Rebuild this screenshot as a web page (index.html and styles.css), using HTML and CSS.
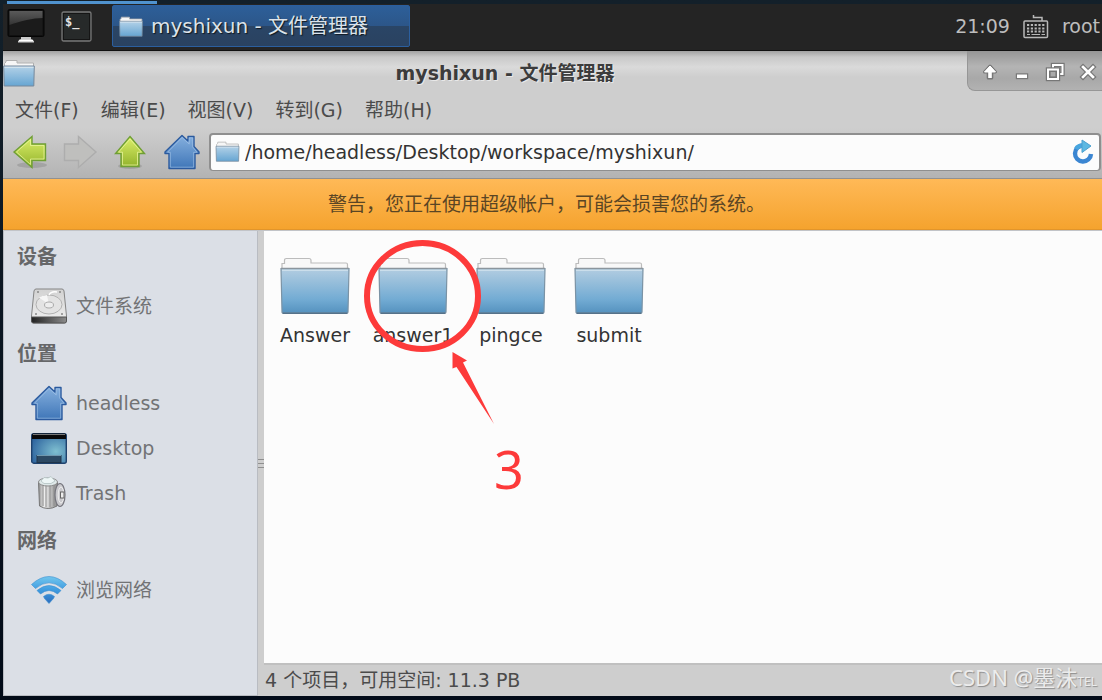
FILE: index.html
```html
<!DOCTYPE html>
<html lang="zh-CN">
<head>
<meta charset="utf-8">
<title>myshixun - 文件管理器</title>
<link rel="stylesheet" href="styles.css">
</head>
<body>
<svg class="defs" width="0" height="0" aria-hidden="true">
  <defs>
    <linearGradient id="gFolder" x1="0" y1="0" x2="0" y2="1"><stop offset="0" stop-color="#b3cde1"/><stop offset=".7" stop-color="#72abd3"/><stop offset="1" stop-color="#5592bf"/></linearGradient>
    <linearGradient id="gFolderS" x1="0" y1="0" x2="0" y2="1"><stop offset="0" stop-color="#b4d2e8"/><stop offset="1" stop-color="#66a5d2"/></linearGradient>
    <linearGradient id="gGreen" x1="0" y1="0" x2="0" y2="1"><stop offset="0" stop-color="#dcf06a"/><stop offset="1" stop-color="#93b32c"/></linearGradient>
    <linearGradient id="gHome" x1="0" y1="0" x2="0" y2="1"><stop offset="0" stop-color="#86b0de"/><stop offset="1" stop-color="#3f76b8"/></linearGradient>
    <linearGradient id="gWifi" gradientUnits="userSpaceOnUse" x1="0" y1="0" x2="0" y2="28"><stop offset="0" stop-color="#74c8ee"/><stop offset=".5" stop-color="#3e9be0"/><stop offset="1" stop-color="#2c6cbc"/></linearGradient>
    <linearGradient id="gDisk" x1="0" y1="0" x2="0" y2="1"><stop offset="0" stop-color="#d2d2d2"/><stop offset="1" stop-color="#f0f0f0"/></linearGradient>
    <linearGradient id="gDark" x1="0" y1="0" x2="1" y2="0"><stop offset="0" stop-color="#222"/><stop offset="1" stop-color="#8c8c8c"/></linearGradient>
    <radialGradient id="gDesk" cx=".7" cy=".6" r=".75"><stop offset="0" stop-color="#7fbfd0"/><stop offset="1" stop-color="#2f66a0"/></radialGradient>
    <linearGradient id="gCan" x1="0" y1="0" x2="1" y2="0"><stop offset="0" stop-color="#8c8c8c"/><stop offset=".3" stop-color="#f0f0f0"/><stop offset=".6" stop-color="#c4c4c4"/><stop offset="1" stop-color="#8a8a8a"/></linearGradient>
    <linearGradient id="gScreen" x1="0" y1="0" x2="0" y2="1"><stop offset="0" stop-color="#5a5a5a"/><stop offset="1" stop-color="#343434"/></linearGradient>
    <symbol id="folder" viewBox="0 0 70 58">
      <path d="M2 14V6.500H4.500V3.500Q4.500 1.500 6.500 1.500H29Q31 1.500 31 3.500V6H66Q67.500 6 67.500 7.500V14Z" fill="#f8f8f8" stroke="#bcbcbc" stroke-width="1.200"/>
      <path d="M1 11.500H69L68 55Q68 56 67 56H3Q2 56 2 55Z" fill="url(#gFolder)" stroke="#7b93a5" stroke-width="1.200"/>
      <path d="M1 11.500H69" stroke="#8b959d" stroke-width="1.500"/>
      <path d="M2 13.300H68" stroke="#d3e3ee"/>
      <path d="M2.500 56.300H67.500" stroke="#55728a" stroke-width="1.500"/>
    </symbol>
    <symbol id="folder-s" viewBox="0 0 32 28">
      <path d="M1.500 8V4.500L3 3V1.500H14V4H30.500V8Z" fill="#f6f6f6" stroke="#b0b0b0"/>
      <path d="M.7 7H31.300L30.800 27H1.200Z" fill="url(#gFolderS)" stroke="#76889a"/>
      <path d="M1.500 8.300H30.500" stroke="#d9e6ef"/>
    </symbol>
    <symbol id="home" viewBox="0 0 36 36">
      <path d="M18 1.500L24 7V2.500H30V12.500L35 18V19.500H31V34.500H5V19.500H1V18Z" fill="url(#gHome)" stroke="#2b5a9e" stroke-width="1.400" stroke-linejoin="round"/>
      <path d="M6.300 33.200V18.300H3.500L18 3.500L25.200 10V3.800H28.700V13L33 18.300H29.700V33.200Z" fill="none" stroke="#a5c6e8" stroke-width=".9" opacity=".7"/>
    </symbol>
  </defs>
</svg>

<div class="tabstrip"><span class="tabline"></span></div>

<header class="panel">
  <button class="launch" aria-label="显示桌面">
    <svg width="38" height="34" viewBox="0 0 38 34"><rect x="1" y=".5" width="36" height="27" rx="1.500" fill="#101010" stroke="#050505"/><rect x="2.500" y="2" width="33" height="24" fill="#1b1b1b"/><path d="M2.500 2H35.500V9C26 9 14 12 2.500 16Z" fill="url(#gScreen)"/><path d="M14 28H24V30L27 32V33.500H11V32L14 30Z" fill="#c9c9c9"/><path d="M12 31.500H26" stroke="#fff" stroke-width="1.500"/></svg>
  </button>
  <button class="launch" aria-label="终端">
    <svg width="31" height="31" viewBox="0 0 31 31"><rect x="1" y="1" width="29" height="29" rx="1.500" fill="#272a2a" stroke="#777" stroke-width="1.300"/><rect x="2.500" y="2.500" width="26" height="26" fill="none" stroke="#151515"/><text class="prompt" x="4" y="15">$_</text></svg>
  </button>
  <button class="task"><svg width="24" height="21"><use href="#folder-s"/></svg>myshixun - 文件管理器</button>
  <div class="tray">
    <time>21:09</time>
    <svg width="26" height="26" viewBox="0 0 26 26" fill="none" stroke="#b8b8b8"><rect x="1" y="8" width="23.500" height="16.500" rx="1" stroke-width="1.500"/><path d="M10.500 2V4.500H19V8" stroke-width="1.500"/><path d="M4 12H22M4 15.500H22M4 18.500H22" stroke-width="2" stroke-dasharray="2.200 1.600"/><path d="M4 21.500H7M8.500 21.500H17M18.500 21.500H22" stroke-width="1.200"/></svg>
    <span>root</span>
  </div>
</header>

<div class="window">
  <div class="titlebar">
    <svg class="title-icon" width="32" height="28"><use href="#folder-s"/></svg>
    <h1>myshixun - 文件管理器</h1>
    <div class="controls">
      <button aria-label="卷起"><svg width="18" height="18" viewBox="0 0 18 18"><path d="M9 3L14.500 9H10.800V15H7.200V9H3.500Z" fill="#fff" stroke="#777" stroke-width="3" stroke-linejoin="round" paint-order="stroke"/><path d="M9 3L14.500 9H3.500Z" fill="#fff" stroke="#fff" stroke-linejoin="round"/></svg></button>
      <button aria-label="最小化"><svg width="18" height="18" viewBox="0 0 18 18"><rect x="4" y="11.500" width="10" height="3.500" fill="#fff" stroke="#777" stroke-width="2.400" paint-order="stroke"/></svg></button>
      <button aria-label="还原"><svg width="20" height="20" viewBox="0 0 20 20" fill="none"><rect x="8" y="3" width="9.500" height="9" stroke="#777" stroke-width="4.400"/><rect x="8" y="3" width="9.500" height="9" stroke="#fff" stroke-width="2"/><rect x="3" y="7.500" width="10" height="9.500" fill="#aaa" stroke="#777" stroke-width="4.400"/><rect x="3" y="7.500" width="10" height="9.500" stroke="#fff" stroke-width="2"/><rect x="5" y="9.500" width="6" height="5.500" stroke="#777"/></svg></button>
      <button aria-label="关闭"><svg width="18" height="18" viewBox="0 0 18 18" stroke-linecap="square"><path d="M4 4L14 14M14 4L4 14" stroke="#777" stroke-width="5"/><path d="M4 4L14 14M14 4L4 14" stroke="#fff" stroke-width="2.600"/></svg></button>
    </div>
  </div>

  <nav class="menu">
    <button>文件(F)</button><button>编辑(E)</button><button>视图(V)</button><button>转到(G)</button><button>帮助(H)</button>
  </nav>

  <div class="toolbar">
    <button aria-label="后退"><svg width="36" height="36" viewBox="0 0 36 36"><ellipse cx="20" cy="31" rx="15" ry="3" fill="#000" opacity=".12"/><path d="M2 18L20 2.500V10H33.500V26.500H20V33.500Z" fill="url(#gGreen)" stroke="#6f9f35" stroke-width="1.400"/><path d="M4.500 18L18.500 5.500V11.500H32V25H18.500V30.500Z" fill="none" stroke="#eef9a5" opacity=".7"/></svg></button>
    <button aria-label="前进" disabled><svg width="36" height="36" viewBox="0 0 36 36"><path d="M34 18L16.500 2.500V10H2.500V26.500H16.500V33.500Z" fill="#bfbfbd" stroke="#adadad" stroke-width="1.400"/></svg></button>
    <button aria-label="向上"><svg width="32" height="36" viewBox="0 0 32 36"><ellipse cx="16" cy="32" rx="12" ry="3" fill="#000" opacity=".12"/><path d="M16 2.500L30.500 19.500H25V32.500H7V19.500H1.500Z" fill="url(#gGreen)" stroke="#6f9f35" stroke-width="1.400"/><path d="M16 5L27.500 18.200H23.500V31H8.500V18.200H4.500Z" fill="none" stroke="#eef9a5" opacity=".7"/></svg></button>
    <button aria-label="主目录"><svg width="36" height="36"><use href="#home"/></svg></button>
    <div class="address">
      <svg width="25" height="21"><use href="#folder-s"/></svg>
      <input type="text" aria-label="路径" value="/home/headless/Desktop/workspace/myshixun/">
      <button aria-label="重新载入"><svg width="24" height="26" viewBox="0 0 24 26"><path d="M12 6.500A8 8 0 1 0 20 15" fill="none" stroke="#3b86d2" stroke-width="4.400"/><path d="M5 10Q7 6.500 12 6.500" fill="none" stroke="#48a6df" stroke-width="4.400"/><path d="M11 1L20 7L11 13.500Z" fill="#5cb8e2" stroke="#4a9fce"/></svg></button>
    </div>
  </div>

  <p class="warning">警告，您正在使用超级帐户，可能会损害您的系统。</p>

  <div class="content">
    <aside class="sidebar">
      <h2>设备</h2>
      <a href="#fs"><svg width="36" height="36" viewBox="0 0 36 36"><path d="M5 1H31Q32.500 1 33 3L35.500 28V33Q35.500 35 33.500 35H2.500Q.5 35 .5 33V28L3 3Q3.500 1 5 1Z" fill="url(#gDisk)" stroke="#858585"/><path d="M.5 29H35.500V33Q35.500 35 33.500 35H2.500Q.5 35 .5 33Z" fill="url(#gDark)" stroke="#555"/><ellipse cx="18" cy="16.500" rx="13" ry="9.500" fill="#e3e3e3" stroke="#b2b2b2"/><path d="M18 16.500L8 9.500A13 9.500 0 0 1 16 7Z" fill="#f6f6f6"/><ellipse cx="18" cy="17" rx="4.500" ry="3" fill="#ededed" stroke="#aaa"/><path d="M6 4H8M28 4H30M4 26H6M30 26H32" stroke="#888" stroke-width="1.500"/><path d="M18 7Q20 3 26 4" fill="none" stroke="#fff" stroke-width="1.500"/></svg>文件系统</a>
      <h2>位置</h2>
      <a href="#headless"><svg width="36" height="36"><use href="#home"/></svg>headless</a>
      <a href="#desktop"><svg width="36" height="36" viewBox="0 0 36 36"><rect x=".7" y="3.700" width="34.600" height="29.500" rx="2" fill="url(#gDesk)" stroke="#1f426d" stroke-width="1.400"/><path d="M1 9V5Q1 3.500 2.500 3.500H33.500Q35 3.500 35 5V9Z" fill="#090909"/><path d="M2 4.500H34" stroke="#777"/><rect x="6" y="25.500" width="24" height="7" fill="#2c4963" stroke="#20354a"/><path d="M6 25.500H30" stroke="#7097ad"/></svg>Desktop</a>
      <a href="#trash"><svg width="36" height="36" viewBox="0 0 36 36"><path d="M7.500 7L8.500 31Q17 36 26 31L26.500 7Z" fill="url(#gCan)" stroke="#777"/><path d="M12 10V31M15 11V32M19 11V32M23 10V31" stroke="#8c8c8c"/><ellipse cx="17" cy="7" rx="9.500" ry="4" fill="#dfe9e9" stroke="#8b8b8b"/><path d="M10 6L13 2.500L17 3L20 1.500L24 6L20 8.500H13Z" fill="#edf6f6" stroke="#b3c2c2" stroke-width=".8"/><ellipse cx="29" cy="20" rx="5" ry="11.500" fill="#c9c9cd" stroke="#74747c" stroke-width="1.200"/><ellipse cx="30" cy="20" rx="2.800" ry="8" fill="none" stroke="#eee"/><rect x="29.500" y="17" width="3.500" height="6" fill="#eee" stroke="#666"/></svg>Trash</a>
      <h2>网络</h2>
      <a href="#network"><svg width="36" height="28" viewBox="0 0 36 28" fill="url(#gWifi)" stroke="#3a8fd0" stroke-width=".6"><path d="M.5 8.500Q18-7.500 35.500 8.500L31.500 12.500Q18 1 4.500 12.500Z"/><path d="M6 14.500Q18 4.500 30 14.500L26.500 18Q18 11 9.500 18Z"/><path d="M12.500 20.500Q18 16 23.500 20.500L22.500 22.500L18 27.500L13.500 22.500Z"/></svg>浏览网络</a>
    </aside>
    <div class="splitter"><span></span><span></span><span></span></div>
    <div class="pane">
      <main class="files">
        <a href="#Answer"><svg width="70" height="58"><use href="#folder"/></svg>Answer</a>
        <a href="#answer1"><svg width="70" height="58"><use href="#folder"/></svg>answer1</a>
        <a href="#pingce"><svg width="70" height="58"><use href="#folder"/></svg>pingce</a>
        <a href="#submit"><svg width="70" height="58"><use href="#folder"/></svg>submit</a>
        <svg class="callout" width="300" height="320" viewBox="0 0 300 320"><ellipse cx="158.500" cy="65" rx="55.500" ry="53" fill="none" stroke="#fd3a3a" stroke-width="6"/><path d="M188.500 121L203 129.500L199 131.500L230 193L192.500 136L188.500 137.500Z" fill="#fd3a3a"/><text class="step" x="230" y="258">3</text></svg>
      </main>
      <footer class="status"><span>4 个项目，可用空间: 11.3 PB</span><span class="mark">CSDN @墨沫<small>TEL</small></span></footer>
    </div>
  </div>
</div>
</body>
</html>
```
FILE: styles.css
```css
* { box-sizing: border-box; }

body {
  margin: 0;
  min-height: 100vh;
  display: flex;
  flex-direction: column;
  padding: 0 0 4px 3px;
  background: linear-gradient(#13202a, #020b18);
  font: 19px/24px "DejaVu Sans", "Noto Sans CJK SC", sans-serif;
  color: #4b4b4b;
  overflow-x: hidden;
}

button, input {
  font: inherit;
  color: inherit;
  background: none;
  border: 0;
  padding: 0;
  margin: 0;
}

a { color: inherit; text-decoration: none; }
svg { display: block; flex: none; }
.defs { position: absolute; }

.tabstrip { height: 4px; padding: 1px 0 0 4px; }
.tabline { display: block; width: 150px; height: 3px; background: #5093cf; }

.panel {
  display: flex;
  align-items: center;
  height: 47px;
  padding: 0 2px 2px 4px;
  background: #242424;
  border-bottom: 1px solid #111;
  color: #bdbdbd;
}
.launch { margin-right: 16px; }
.launch + .launch { margin-right: 20px; }
.prompt { font: bold 12px "DejaVu Sans Mono", monospace; fill: #e4e4e4; }

.task {
  display: flex;
  align-items: center;
  gap: 8px;
  width: 298px;
  height: 42px;
  padding: 0 6px;
  border: 1px solid #2b5f9f;
  border-radius: 2px;
  background: linear-gradient(#2d5f99 0, #2c5689 50%, #2a4566 51%, #2a4260);
  color: #dce3ea;
  font-size: 20px;
  text-shadow: 1px 1px 1px #101820;
}

.tray { display: flex; align-items: center; gap: 13px; margin-left: auto; }

.window {
  flex: 1;
  display: flex;
  flex-direction: column;
  background: #cecece;
}

.titlebar {
  display: flex;
  align-items: flex-start;
  height: 41px;
  padding-top: 8px;
  background: linear-gradient(#a2a2a2, #c9c9c9 6px, #dadada 16px, #cecece 26px);
}
.titlebar h1 {
  flex: 1;
  margin: 0;
  padding: 2px 0 0 8px;
  font-size: 19px;
  line-height: 24px;
  text-align: center;
  color: #3c3c3c;
  text-shadow: 1px 1px 0 #e8e8e8;
}
.controls {
  display: flex;
  justify-content: space-between;
  align-items: center;
  width: 135px;
  height: 40px;
  margin-top: -8px;
  padding: 3px 5px 0 13px;
  border: solid #969696;
  border-width: 0 0 1px 1px;
  border-radius: 0 0 0 8px;
  background: linear-gradient(#959595, #b4b4b4 40%, #a8a8a8 70%, #b2b2b2);
}

.menu { display: flex; gap: 22px; padding: 6px 12px; }

.toolbar {
  display: flex;
  align-items: center;
  gap: 16px;
  height: 51px;
  padding: 0 1px 2px 9px;
  border-bottom: 1px solid #919191;
  background: linear-gradient(#cecece, #b3b3b3);
}
.toolbar > button[aria-label="前进"] { margin-left: -2px; }
.toolbar > button[aria-label="主目录"] { margin: 0 -7px 0 2px; }
.address {
  flex: 1;
  display: flex;
  align-items: center;
  gap: 5px;
  height: 38px;
  padding: 0 4px 2px 4px;
  border: 1px solid #8f8f8f;
  border-width: 2px 2px 1px;
  border-radius: 4px;
  background: #fcfcfc;
  color: #333;
}
.address input { flex: 1; min-width: 0; outline: 0; }

.warning {
  margin: 0;
  padding: 13px 12px 13px 0;
  text-align: center;
  color: #5a4524;
  background: linear-gradient(#ffb957, #f5a32e);
  border-bottom: 1px solid #e2952a;
}

.content { flex: 1; display: flex; border-top: 1px solid #c2c4c8; }

.sidebar {
  width: 255px;
  border: solid #b9bcc2;
  border-width: 0 1px 1px;
  background: #dbdfe6;
  color: #727375;
}
.sidebar h2 { margin: 0; padding: 14px 13px; font-size: 20px; line-height: 24px; color: #666769; }
.sidebar a { display: flex; align-items: center; gap: 9px; height: 45px; padding-left: 27px; }

.splitter {
  display: flex;
  flex-direction: column;
  justify-content: center;
  gap: 3px;
  width: 6px;
  background: #cecece;
}
.splitter span { height: 1px; background: #8f8f8f; }

.pane { flex: 1; display: flex; flex-direction: column; min-width: 0; }
.files {
  position: relative;
  flex: 1;
  display: flex;
  align-items: flex-start;
  padding: 26px 2px;
  background: #fcfcfc;
  color: #333;
}
.files a {
  display: flex;
  flex-direction: column;
  align-items: center;
  gap: 8px;
  width: 98px;
}
.callout { position: absolute; left: 0; top: 0; pointer-events: none; }
.step { font: 52px "Noto Sans", sans-serif; fill: #fd3a3a; }

.status {
  display: flex;
  justify-content: space-between;
  align-items: center;
  height: 33px;
  padding: 0 5px 2px 1px;
  border-top: 2px solid #c0c0c0;
}
.mark {
  font: 22px/24px "Noto Sans", "Noto Sans CJK SC", sans-serif;
  color: #ececec;
  text-shadow: 1px 1px 1px #8d8d8d;
}
.mark small { font-size: 12px; }
```
